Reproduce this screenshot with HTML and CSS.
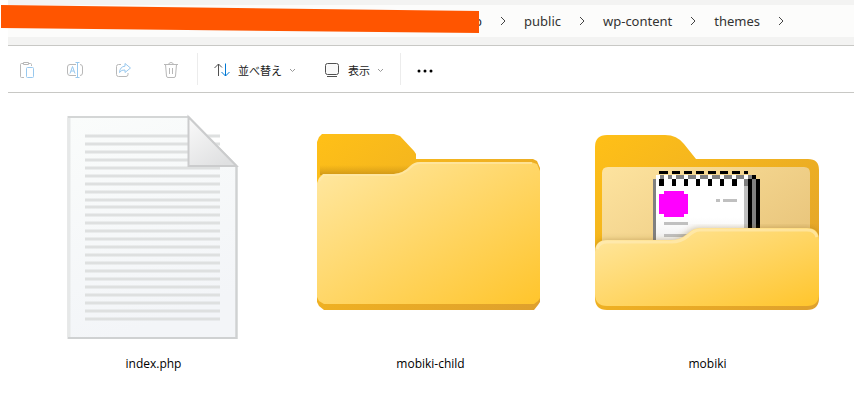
FILE: index.html
```
<!DOCTYPE html>
<html lang="ja">
<head>
    <meta charset="UTF-8">
    <meta name="viewport" content="width=device-width, initial-scale=1.0">
    <title>themes</title>
    <link rel="stylesheet" href="styles.css">
</head>
<body>

<div class="window">
    <header class="address">
        <nav class="breadcrumb" aria-label="Path">
            <a class="first" href="#">p</a>
            <svg class="arrow" viewBox="0 0 6 10"><path d="M1 1l4 4-4 4"/></svg>
            <a href="#">public</a>
            <svg class="arrow" viewBox="0 0 6 10"><path d="M1 1l4 4-4 4"/></svg>
            <a href="#">wp-content</a>
            <svg class="arrow" viewBox="0 0 6 10"><path d="M1 1l4 4-4 4"/></svg>
            <a href="#">themes</a>
            <svg class="arrow" viewBox="0 0 6 10"><path d="M1 1l4 4-4 4"/></svg>
        </nav>
    </header>

    <div class="toolbar">
        <div class="tools">
            <button class="tool" aria-label="Paste" disabled>
                <svg class="icon" viewBox="0 0 16 16">
                    <path class="grey" d="M4 1.5H2.500Q1.500 1.500 1.500 2.500V14.500Q1.500 15.500 2.500 15.500H5M10 1.500h1.500Q12.500 1.500 12.500 2.500V4M4.500 .500h5v2h-5z"/>
                    <rect class="blue" x="7.500" y="5.500" width="7" height="10" rx="1"/>
                </svg>
            </button>
            <button class="tool" aria-label="Rename" disabled>
                <svg class="icon" viewBox="0 0 16 16">
                    <path class="grey" d="M9 2.500H3Q.5 2.500 .5 5V11Q.5 13.500 3 13.500H9M13 2.500Q15.500 2.500 15.500 5V11Q15.500 13.500 13 13.500"/>
                    <path class="blue" d="M8.500 .5H12.500M10.500 .5V15.500M8.500 15.500H12.500M3 11.500L5.500 4.500L8 11.500M4 9H7"/>
                </svg>
            </button>
            <button class="tool" aria-label="Share" disabled>
                <svg class="icon" viewBox="0 0 16 16">
                    <path class="grey" d="M6 2.500H3.500Q1.500 2.500 1.500 4.500V12.500Q1.500 14.500 3.500 14.500H11Q13 14.500 13 12.500V11"/>
                    <path class="blue" d="M10 1.500L15.500 6L10 10.500V8Q6.500 7.500 4.500 10.500Q5 4.500 10 4.200Z"/>
                </svg>
            </button>
            <button class="tool" aria-label="Delete" disabled>
                <svg class="icon" viewBox="0 0 16 16">
                    <path class="grey" d="M1 2.500H15M5.500 2.500Q6 .5 8 .5T10.500 2.500M2.500 2.500L3.500 14Q3.600 15.500 5 15.500H11Q12.400 15.500 12.500 14L13.500 2.500M6.500 6V12M9.500 6V12"/>
                </svg>
            </button>
        </div>
        <span class="divider"></span>
        <button class="menu">
            <svg class="icon" viewBox="0 0 16 16">
                <path class="dark" d="M4.500 14V2M.5 6L4.500 2L8 5.500"/>
                <path class="accent" d="M11.500 1.500V14M7.500 10L11.500 14L15.500 10"/>
            </svg>
            <span>並べ替え</span>
            <svg class="caret" viewBox="0 0 7 5"><path d="M1 1l2.500 2.500L6 1"/></svg>
        </button>
        <button class="menu">
            <svg class="icon" viewBox="0 0 16 16">
                <rect class="dark screen" x="1.500" y="1.500" width="13" height="11" rx="2"/>
                <path class="dark" d="M3 14.500H13"/>
            </svg>
            <span>表示</span>
            <svg class="caret" viewBox="0 0 7 5"><path d="M1 1l2.500 2.500L6 1"/></svg>
        </button>
        <span class="divider"></span>
        <button class="menu" aria-label="More">
            <svg class="icon" viewBox="0 0 16 16">
                <circle cx="2" cy="9" r="1.500"/><circle cx="8" cy="9" r="1.500"/><circle cx="14" cy="9" r="1.500"/>
            </svg>
        </button>
    </div>

    <main class="files">
        <figure class="file">
            <svg viewBox="0 0 241 241">
                <defs>
                    <linearGradient id="paper" x1="0" y1="0" x2="0.3" y2="1">
                        <stop offset="0" stop-color="#fafcfb"/>
                        <stop offset="1" stop-color="#f3f5f8"/>
                    </linearGradient>
                    <linearGradient id="fold" x1="0" y1="0" x2="0.7" y2="1">
                        <stop offset="0" stop-color="#fafafa"/>
                        <stop offset="1" stop-color="#dfe0e1"/>
                    </linearGradient>
                </defs>
                <path d="M35.500 12H155.500L203.500 61V233H35.500Z" fill="url(#paper)" stroke="#d4d6d6" stroke-width="2"/>
                <path d="M36 13V232" stroke="#e6e8e8" stroke-width="3"/>
                <path d="M203.500 61V233H35" fill="none" stroke="#cfd1d2" stroke-width="2"/>
                <path d="M52 31H187M52 39H187M52 47H187M52 55H187M52 63H187M52 71H187M52 79H187M52 87H187M52 95H187M52 102H187M52 110H187M52 118H187M52 126H187M52 134H187M52 142H187M52 150H187M52 158H187M52 166H187M52 174H187M52 182H187M52 190H187M52 198H187M52 206H187M52 214H187" stroke="#dee0e0" stroke-width="3"/>
                <path d="M155.500 12V61H203.500Z" fill="url(#fold)" stroke="#cbcccd" stroke-width="2"/>
            </svg>
            <figcaption>index.php</figcaption>
        </figure>

        <figure class="file">
            <svg viewBox="0 0 241 241">
                <defs>
                    <linearGradient id="back" x1="0" y1="0" x2="1" y2="1">
                        <stop offset="0" stop-color="#ffc017"/>
                        <stop offset="1" stop-color="#dea02d"/>
                    </linearGradient>
                    <linearGradient id="front" x1="0" y1="0" x2="1" y2="1">
                        <stop offset="0" stop-color="#ffe8a3"/>
                        <stop offset="1" stop-color="#ffc52c"/>
                    </linearGradient>
                    <linearGradient id="shade" x1="0" y1="0" x2="0" y2="1">
                        <stop offset="0" stop-color="#d99f16" stop-opacity="0"/>
                        <stop offset="1" stop-color="#cf9717"/>
                    </linearGradient>
                </defs>
                <path d="M7 37L9 32L12 29H84L90 31L104 46L106 49V54H223L227 56L230 63V197L228 200L224 205H14L9 201L7 197Z" fill="url(#back)"/>
                <path d="M10 60H104L95 70H10Z" fill="url(#shade)"/>
                <path d="M7 78L9 73L13 69H84Q94 68 100 61Q104 57 110 57H221L227 59L230 66V193L228 196L224 199H14L9 196L7 192Z" fill="url(#front)"/>
                <path d="M9 76L14 70H84Q94 69 101 62Q105 58 110 58H222" fill="none" stroke="#ffeaae" stroke-opacity=".6" stroke-width="2"/>
            </svg>
            <figcaption>mobiki-child</figcaption>
        </figure>

        <figure class="file">
            <svg viewBox="0 0 241 241">
                <defs>
                    <linearGradient id="panel" x1="0" y1="0" x2="1" y2="0.6">
                        <stop offset="0" stop-color="#fde39f"/>
                        <stop offset="1" stop-color="#eac77e"/>
                    </linearGradient>
                    <linearGradient id="page" x1="0" y1="0" x2="0" y2="1">
                        <stop offset="0.6" stop-color="#ffffff"/>
                        <stop offset="1" stop-color="#eeeeee"/>
                    </linearGradient>
                    <filter id="soft"><feGaussianBlur stdDeviation="3"/></filter>
                    <clipPath id="inner"><path d="M8 54H232V160H8Z"/></clipPath>
                </defs>
                <path d="M8 42Q8 30 20 30H78Q90 30 97 39L109 54H221Q232 54 232 65V193Q232 205 220 205H20Q8 205 8 193Z" fill="url(#back)"/>
                <path d="M15 68Q15 62 21 62H217Q223 62 223 68V150H15Z" fill="url(#panel)"/>
                <g shape-rendering="crispEdges">
                    <path d="M69 70H157V140H69Z" fill="url(#page)"/>
                    <path d="M66 74H69V140H66ZM70 70H165V74H70ZM165 74H169V140H165ZM157 74H161V81H157Z" fill="#808080"/>
                    <path d="M157 81H161V140H157Z" fill="#c0c0c0"/>
                    <path d="M69 70H73V74H69ZM77 70H81V74H77ZM85 70H89V74H85ZM97 70H101V74H97ZM109 70H113V74H109ZM121 70H125V74H121ZM133 70H137V74H133ZM145 70H149V74H145ZM157 70H161V74H157Z" fill="#fff"/>
                    <path d="M72 66H81V69H72ZM85 66H93V69H85ZM97 66H105V69H97ZM109 66H117V69H109ZM121 66H129V69H121ZM133 66H141V69H133ZM145 66H153V69H145ZM157 66H161V69H157Z"/>
                    <path d="M72 74H77V81H72ZM85 74H89V81H85ZM97 74H101V81H97ZM109 74H113V81H109ZM121 74H125V81H121ZM133 74H137V81H133ZM145 74H150V81H145Z"/>
                    <path d="M165 70H169V74H165ZM161 74H165V140H161ZM169 74H173V140H169Z"/>
                    <path d="M77 86H97V89H101V109H97V112H77V109H72V89H77Z" fill="#f0f"/>
                    <path d="M129 94H133V97H129ZM136 94H150V97H136ZM77 117H101V120H77ZM77 129H101V132H77Z" fill="#c0c0c0"/>
                </g>
                <path d="M8 144Q9 135 19 135H85Q93 134 100 128Q106 123 111 123H220Q231 123 232 134V160H8Z" fill="#75501e" fill-opacity=".35" filter="url(#soft)" clip-path="url(#inner)"/>
                <path d="M8 147Q8 135 20 135H84Q93 135 100 129Q106 123 113 123H220Q232 123 232 135V189Q232 201 220 201H20Q8 201 8 189Z" fill="url(#front)"/>
                <path d="M10 144Q12 137 20 137H84Q94 137 101 131Q107 125 113 125H220Q228 125 230 132" fill="none" stroke="#ffedba" stroke-opacity=".6" stroke-width="3"/>
            </svg>
            <figcaption>mobiki</figcaption>
        </figure>
    </main>
</div>
<div class="redaction"></div>

</body>
</html>
```

FILE: styles.css
```
body {
    font-family: "Open Sans", "Noto Sans CJK JP", sans-serif;
    background-color: white;
    color: #1b1b1b;
    margin: 0;
    padding: 0;
}
.window {
    margin-left: 8px;
}
.address {
    background-color: #f3f3f2;
    padding: 5px 0 8px;
    border-bottom: 1px solid #c8c8c5;
}
.breadcrumb {
    display: flex;
    align-items: center;
    gap: 18px;
    height: 32px;
    padding-left: 466px;
    background-color: #fcfcfb;
    font-family: "Noto Sans", sans-serif;
    font-size: 13px;
}
.breadcrumb a {
    color: #333;
    text-decoration: none;
}
.arrow {
    width: 6px;
    height: 10px;
    fill: none;
    stroke: #444;
}
.toolbar {
    display: flex;
    align-items: center;
    gap: 4px;
    height: 46px;
    padding-left: 3px;
    border-bottom: 1px solid #c8c8c5;
}
.tools {
    display: flex;
    gap: 16px;
    padding-right: 6px;
}
button {
    display: flex;
    align-items: center;
    justify-content: center;
    height: 32px;
    padding: 2px 0 0;
    border: none;
    background: none;
    color: #1b1b1b;
    font-family: inherit;
    font-size: 11px;
}
.tool {
    width: 32px;
}
.menu {
    padding: 2px 12px 0;
}
.menu span {
    margin: 0 7px 0 8px;
    font-family: "Noto Sans CJK JP", sans-serif;
    font-weight: 400;
}
.icon {
    width: 16px;
    height: 16px;
}
.grey, .blue, .dark, .accent {
    fill: none;
}
.grey {
    stroke: #b8b8b8;
}
.blue {
    stroke: #98c8ee;
}
.dark {
    stroke: #505050;
}
.accent {
    stroke: #0078d4;
}
.screen {
    fill: #f9f9f9;
}
.caret {
    width: 7px;
    height: 5px;
    fill: none;
    stroke: #999;
}
.divider {
    width: 1px;
    height: 32px;
    background-color: #ececec;
}
.files {
    display: grid;
    grid-template-columns: repeat(auto-fill, 277px);
    padding: 12px 0 12px 7px;
}
.file {
    margin: 0;
    text-align: center;
}
.file svg {
    display: block;
    width: 241px;
    margin: 0 auto 8px;
}
.file figcaption {
    font-size: 12px;
    line-height: 20px;
    color: #000;
}
/* covers the private part of the path */
.redaction {
    position: absolute;
    top: 5px;
    left: 1px;
    width: 478px;
    height: 28px;
    background-color: #ff5500;
    clip-path: polygon(0 0, 100% 6px, 100% 100%, 0 23px);
}
```
